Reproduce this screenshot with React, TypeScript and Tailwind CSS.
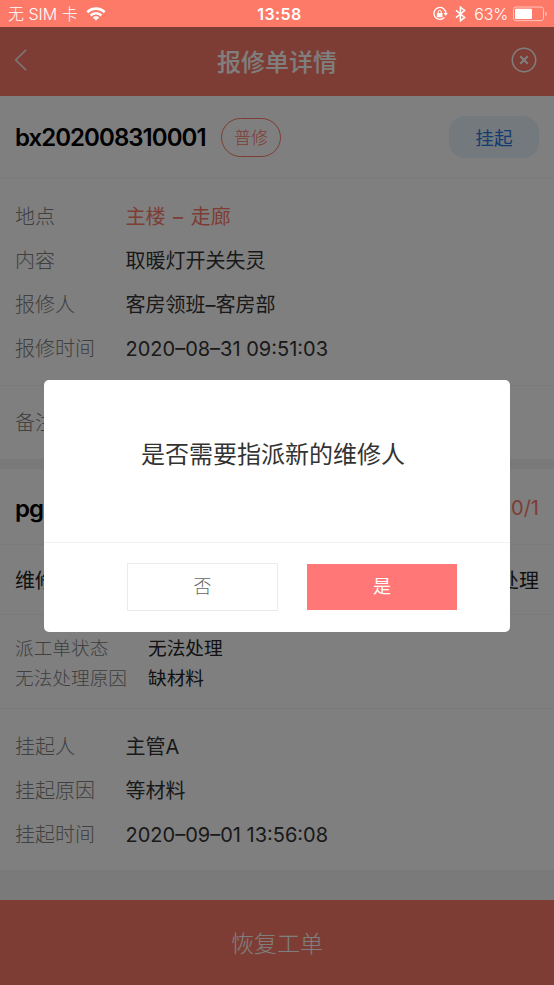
const info = [
  { label: "地点", value: "主楼 – 走廊", highlight: true },
  { label: "内容", value: "取暖灯开关失灵" },
  { label: "报修人", value: "客房领班–客房部" },
  { label: "报修时间", value: "2020–08–31 09:51:03" },
];

const pending = [
  { label: "挂起人", value: "主管A" },
  { label: "挂起原因", value: "等材料" },
  { label: "挂起时间", value: "2020–09–01 13:56:08" },
];

const dispatch = [
  { label: "派工单状态", value: "无法处理" },
  { label: "无法处理原因", value: "缺材料" },
];

// thinner CJK face for labels and secondary text
const thin =
  "font-['Inter','Noto_Sans_CJK_SC_Light','Noto_Sans_CJK_SC',sans-serif]";

type Row = { label: string; value: string; highlight?: boolean };

function InfoRows({ rows }: { rows: Row[] }) {
  return (
    <dl>
      {rows.map((row) => (
        <div key={row.label} className="flex h-[44px] items-center text-[20px]">
          <dt className={`w-[110.5px] text-[#808080] ${thin}`}>{row.label}</dt>
          <dd
            className={
              row.highlight ? "text-[#fb7a68] [word-spacing:2px]" : "text-[#333]"
            }
          >
            {row.value}
          </dd>
        </div>
      ))}
    </dl>
  );
}

function StatusBar() {
  return (
    <div className="relative z-20 grid h-[27px] shrink-0 grid-cols-3 items-center bg-[#fd7a68] pr-[6px] pl-[8px] text-[16px] text-white">
      <div className="flex items-center gap-[8px]">
        <span className="font-light whitespace-nowrap">无 SIM 卡</span>
        <svg width="20" height="14" viewBox="0 0 20 14" fill="none">
          <path d="M1.4 5.2a12.2 12.2 0 0 1 17.2 0" stroke="white" strokeWidth="2.8" />
          <path d="M4.6 8.5a7.6 7.6 0 0 1 10.8 0" stroke="white" strokeWidth="2.6" />
          <path d="M10 13.6 6.7 10.5a4.7 4.7 0 0 1 6.6 0z" fill="white" />
        </svg>
      </div>
      <span className="pl-[3px] text-center font-semibold tracking-[0.4px]">
        13:58
      </span>
      <div className="flex items-center justify-end">
        <svg width="16" height="16" viewBox="0 0 16 16" fill="none">
          <path
            d="M12.4 11.4a6 6 0 1 1 1.5-3.8"
            stroke="white"
            strokeWidth="1.4"
          />
          <path d="M11.6 7h4.2l-2.1 2.9z" fill="white" />
          <rect x="4.9" y="7" width="5.6" height="4.2" rx=".5" fill="white" />
          <path d="M6.1 7.4V6a1.6 1.6 0 0 1 3.2 0v1.4" stroke="white" />
        </svg>
        <svg className="ml-[7px]" width="11" height="16" viewBox="0 0 11 16" fill="none">
          <path
            d="m1 4.3 8.6 7.2-4.2 3.4V1.1l4.2 3.4L1 11.7"
            stroke="white"
            strokeWidth="1.5"
          />
        </svg>
        <span className="ml-[8px] font-light tracking-[-0.2px]">63%</span>
        <svg className="ml-[5px]" width="35" height="16" viewBox="0 0 35 16" fill="none">
          <rect x=".5" y="1" width="30" height="13.6" rx="2.5" stroke="#ffc5bd" />
          <rect x="2" y="2.7" width="17" height="10.3" rx="1" fill="white" />
          <path d="M32.3 5.5c2 .8 2 3.8 0 4.6z" fill="#ffc5bd" />
        </svg>
      </div>
    </div>
  );
}

function ConfirmDialog() {
  return (
    <div className="absolute inset-x-0 top-[27px] bottom-0 z-10 bg-black/50 px-[44px] pt-[353px]">
      <div className="flex h-[252px] w-[466px] flex-col rounded-[5px] bg-white">
        <p className="flex h-[162px] items-center justify-center pr-[8px] pb-[12px] text-[24px] text-[#333]">
          是否需要指派新的维修人
        </p>
        <div className="flex flex-1 gap-[29px] border-t border-[#f2f2f2] pt-[20px] pl-[83px] text-[18px]">
          <button className={`h-[48px] w-[151px] border border-[#ebebeb] text-[#666] ${thin}`}>
            否
          </button>
          <button className="mt-[1px] h-[46px] w-[150px] bg-[#ff7777] text-white">
            是
          </button>
        </div>
      </div>
    </div>
  );
}

export default function App() {
  return (
    <div className="relative flex h-[985px] w-[554px] flex-col overflow-hidden bg-white font-['Inter','Noto_Sans_CJK_SC',sans-serif] leading-none">
      <StatusBar />

      <header className="flex h-[69px] shrink-0 items-center justify-between bg-[#fd7a68] pr-[17px] pl-[14px] text-white">
        <svg width="29" height="26" viewBox="0 0 29 26" fill="none" className="mb-[4px]">
          <path d="M12.2 2.7 1.7 13l10.5 10.3" stroke="#f4f4f4" strokeWidth="1.6" />
        </svg>
        <h1 className="pt-[3px] text-[24px] font-medium">报修单详情</h1>
        <svg width="26" height="26" viewBox="0 0 26 26" fill="none" className="mb-[3px]">
          <circle cx="13" cy="13" r="11.7" stroke="white" strokeWidth="1.5" />
          <path d="m9.3 9.3 7.4 7.4m0-7.4-7.4 7.4" stroke="white" strokeWidth="2" />
        </svg>
      </header>

      <section className="flex h-[83px] shrink-0 items-center border-b border-[#f4f4f4] px-[15px]">
        <h2 className="w-[192px] pt-[2px] text-[24px] font-semibold tracking-[-0.95px] text-black">
          bx202008310001
        </h2>
        <span
          className={`ml-[14px] flex h-[39px] w-[60px] items-center justify-center rounded-full border border-[#fd7a68] pt-[2px] text-[17px] text-[#fd7a68] ${thin}`}
        >
          普修
        </span>
        <button className="ml-auto h-[42px] w-[90px] rounded-[16px] bg-[#e6f2fa] pt-[4px] text-[18.67px] text-[#267be0]">
          挂起
        </button>
      </section>

      <section className="h-[207px] shrink-0 border-b border-[#f4f4f4] px-[15px] pt-[16px]">
        <InfoRows rows={info} />
      </section>

      <section
        className={`flex h-[73px] shrink-0 items-center px-[15px] pt-[1px] text-[20px] text-[#808080] ${thin}`}
      >
        备注
      </section>
      <div className="h-[10px] shrink-0 bg-[#f2f2f2]" />

      <section className="flex h-[76px] shrink-0 items-center justify-between border-b border-[#f4f4f4] px-[15px] pt-[2px]">
        <h2 className="pt-[2px] text-[24px] font-semibold tracking-[-0.95px] text-black">
          pg202008310001
        </h2>
        <span className="text-[20px] text-[#fb7a68]">0/1</span>
      </section>
      <section className="flex h-[70px] shrink-0 items-center justify-between border-b border-[#f4f4f4] px-[15px] pt-[2px] text-[20px] text-[#222]">
        <span>维修人</span>
        <span>无法处理</span>
      </section>

      <section className="h-[94px] shrink-0 border-b border-[#f4f4f4] px-[15px] pt-[19px] text-[18.67px]">
        {dispatch.map((row) => (
          <div key={row.label} className="flex h-[30px] items-center">
            <span className={`w-[133px] text-[#808080] ${thin}`}>{row.label}</span>
            <span className="text-[#222]">{row.value}</span>
          </div>
        ))}
      </section>

      <section className="h-[161px] shrink-0 px-[15px] pt-[16px]">
        <InfoRows rows={pending} />
      </section>
      <div className="h-[30px] shrink-0 bg-[#f5f5f5]" />

      <button
        className={`h-[85px] shrink-0 bg-[#fd7a68] pt-[3px] text-[23px] text-white ${thin}`}
      >
        恢复工单
      </button>

      <ConfirmDialog />
    </div>
  );
}
